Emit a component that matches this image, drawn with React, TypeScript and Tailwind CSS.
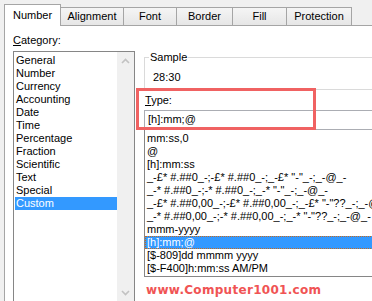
import React from "react";

const TABS = [
  { label: "Number", width: "w-[57px]", active: true },
  { label: "Alignment", width: "w-[63px]", active: false },
  { label: "Font", width: "w-[53px]", active: false },
  { label: "Border", width: "w-[56px]", active: false },
  { label: "Fill", width: "w-[54px]", active: false },
  { label: "Protection", width: "w-[65px]", active: false },
];

const CATEGORIES = [
  "General",
  "Number",
  "Currency",
  "Accounting",
  "Date",
  "Time",
  "Percentage",
  "Fraction",
  "Scientific",
  "Text",
  "Special",
  "Custom",
];

const FORMATS = [
  "mm:ss,0",
  "@",
  "[h]:mm:ss",
  '_-£* #.##0_-;-£* #.##0_-;_-£* "-"_-;_-@_-',
  '_-* #.##0_-;-* #.##0_-;_-* "-"_-;_-@_-',
  '_-£* #.##0,00_-;-£* #.##0,00_-;_-£* "-"??_-;_-@_-',
  '_-* #.##0,00_-;-* #.##0,00_-;_-* "-"??_-;_-@_-',
  "mmm-yyyy",
  "[h]:mm;@",
  "[$-809]dd mmmm yyyy",
  "[$-F400]h:mm:ss AM/PM",
];

function Chevron({ up }: { up: boolean }) {
  return (
    <svg width="9" height="6" viewBox="0 0 9 6" fill="none">
      <polyline
        points={up ? "1,5 4.5,1.5 8,5" : "1,1 4.5,4.5 8,1"}
        stroke="#c2c2c2"
        strokeWidth="1.6"
      />
    </svg>
  );
}

export default function App() {
  return (
    <div className="relative h-[301px] w-[372px] overflow-hidden bg-[#f0f0f0] font-['Liberation_Sans',Arial,sans-serif] text-[11px] leading-[13px] text-black">
      {/* tab strip */}
      <div className="relative z-10 flex h-[25px] items-end pl-[4px]">
        {TABS.map((t) =>
          t.active ? (
            <div
              key={t.label}
              className={`${t.width} mb-[-1px] flex h-[22px] shrink-0 items-center justify-center border border-b-0 border-[#a5a5a5] bg-white pb-[1px]`}
            >
              {t.label}
            </div>
          ) : (
            <div
              key={t.label}
              className={`${t.width} flex h-[18px] shrink-0 items-center justify-center border-t border-r border-[#a5a5a5] bg-linear-to-b from-[#f5f5f5] to-[#e6e6e6]`}
            >
              {t.label}
            </div>
          ),
        )}
      </div>

      {/* panel */}
      <div className="ml-[4px] flex h-[276px] border-t border-l border-[#a5a5a5] bg-white">
        <div className="w-[130px] shrink-0 pt-[8px] pl-[8px]">
          <div>
            <span className="underline">C</span>ategory:
          </div>
          <div className="mt-[4px] flex h-[251px] w-[122px] border border-[#868686]">
            <div className="flex-1 pt-[2px]">
              {CATEGORIES.map((c) => (
                <div
                  key={c}
                  className={
                    c === "Custom"
                      ? "ml-[1px] h-[13px] bg-[#3399ff] pl-[1px] text-white"
                      : "ml-[1px] h-[13px] pl-[1px]"
                  }
                >
                  {c}
                </div>
              ))}
            </div>
            <div className="flex w-[17px] flex-col justify-between bg-[#f0f0f0]">
              <div className="flex h-[17px] items-center justify-center">
                <Chevron up />
              </div>
              <div className="flex h-[17px] items-center justify-center">
                <Chevron up={false} />
              </div>
            </div>
          </div>
        </div>

        <div className="w-[260px] shrink-0 pl-[9px]">
          <div className="relative mt-[31px] h-[33px] border-t border-b border-l border-[#dadada] pt-[13px] pl-[8px]">
            <span className="absolute -top-[7px] left-[4px] bg-white px-[1px]">Sample</span>
            28:30
          </div>
          <div className="mt-[4px] pl-[1px]">
            <span className="underline">T</span>ype:
          </div>
          <div className="mt-[3px] h-[20px] border border-[#abadb3] pt-[2px] pl-[3px]">
            [h]:mm;@
          </div>
          <div className="overflow-hidden border-b border-l border-[#868686] pt-[2px] pb-[1px] whitespace-nowrap">
            {FORMATS.map((f) => (
              <div
                key={f}
                className={
                  f === "[h]:mm;@"
                    ? "h-[13px] border border-dotted border-[#c86a1c] bg-[#3399ff] pl-[1px] leading-[11px] text-white"
                    : "h-[13px] pl-[2px]"
                }
              >
                {f}
              </div>
            ))}
          </div>
          <div className="mt-[6px] pl-[2px] font-['DejaVu_Sans',sans-serif] text-[12px] leading-[14px] font-bold tracking-[0.3px] text-[#f05454]">
            www.Computer1001.com
          </div>
        </div>
      </div>

      {/* annotation box */}
      <div className="absolute top-[88px] left-[136px] h-[42px] w-[180px] border-[3px] border-[#f06262]" />
    </div>
  );
}
